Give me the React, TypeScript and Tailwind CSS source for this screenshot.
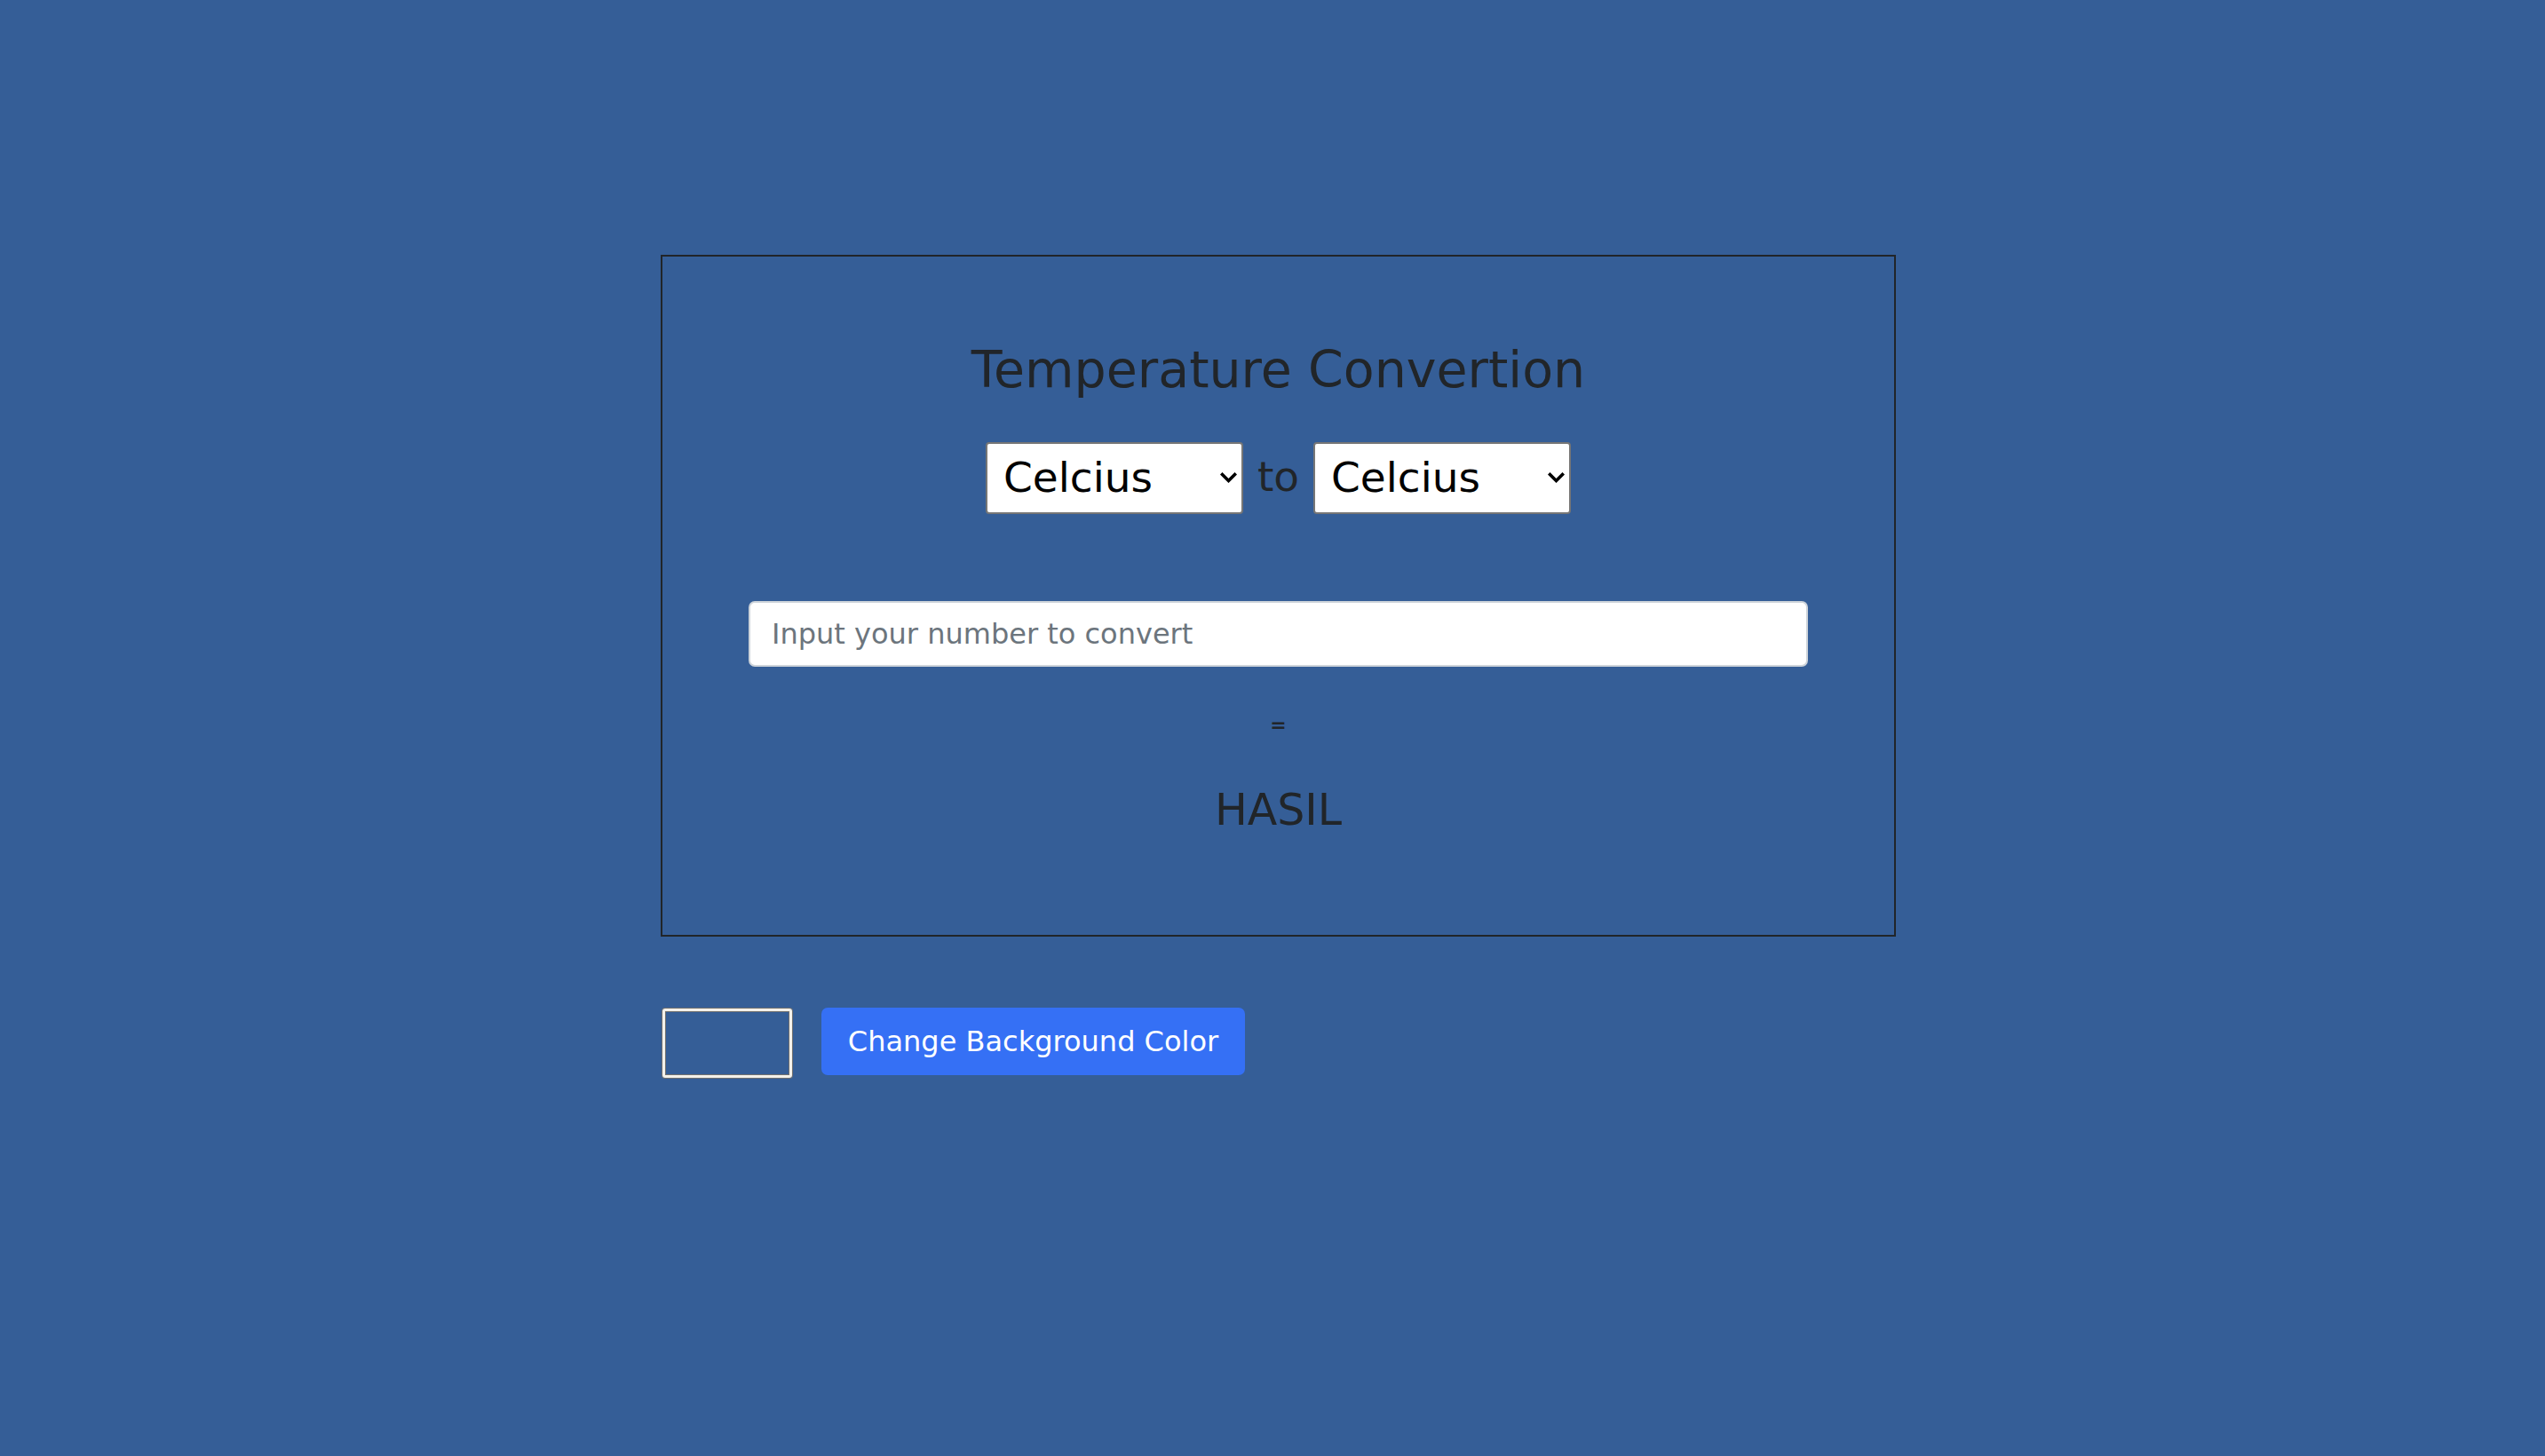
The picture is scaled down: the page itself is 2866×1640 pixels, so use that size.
import { useState } from "react";

const units = ["Celcius", "Fahrenheit", "Kelvin", "Reamur"];

function UnitSelect({
  value,
  onChange,
}: {
  value: string;
  onChange: (v: string) => void;
}) {
  return (
    <div className="relative">
      <select
        value={value}
        onChange={(e) => onChange(e.target.value)}
        className="appearance-none w-[290px] h-[81px] bg-white text-black text-[47px] border-2 border-[#767676] rounded-[4px] pl-[18px] pr-[34px] outline-none"
      >
        {units.map((u) => (
          <option key={u}>{u}</option>
        ))}
      </select>
      {/* chevron */}
      <svg
        className="absolute right-[7px] top-[34px] pointer-events-none"
        width="19"
        height="13"
        viewBox="0 0 19 13"
        fill="none"
      >
        <polyline
          points="2.5,2.5 9.5,9.5 16.5,2.5"
          stroke="#000"
          strokeWidth="3.6"
          strokeLinecap="square"
        />
      </svg>
    </div>
  );
}

function App() {
  const [from, setFrom] = useState("Celcius");
  const [to, setTo] = useState("Celcius");
  const [value, setValue] = useState("");

  return (
    <div
      className="min-h-screen w-full bg-[#355e97] text-[#212529] pt-[287px] pl-[744px]"
      style={{ fontFamily: "'DejaVu Sans', Lato, sans-serif" }}
    >
      {/* Converter card */}
      <div className="w-[1391px] h-[768px] border-2 border-[#212529] flex flex-col items-center pt-[93px]">
        <h1 className="text-[57px] leading-[68px]">Temperature Convertion</h1>

        <div className="mt-[48px] flex items-center">
          <UnitSelect value={from} onChange={setFrom} />
          <span className="w-[79px] text-center text-[47px] leading-none pb-[4px]">to</span>
          <UnitSelect value={to} onChange={setTo} />
        </div>

        <div className="w-full px-[97px] mt-[98px]">
          <input
            type="text"
            value={value}
            onChange={(e) => setValue(e.target.value)}
            placeholder="Input your number to convert"
            className="w-full h-[74px] bg-white rounded-[7px] border-2 border-[#ced4da] px-[24px] text-[32px] text-[#212529] placeholder:text-[#6c757d] outline-none"
          />
        </div>

        <p className="mt-[48px] text-[22px] leading-[36px] font-bold">=</p>
        <p className="mt-[48px] text-[49px] leading-[60px]">HASIL</p>
      </div>

      {/* Background controls */}
      <div className="mt-[80px] flex items-start gap-[33px]">
        <div className="ml-[2px] mt-[1px] w-[146px] h-[78px] rounded-[3px] border-[3px] border-[#f4f1ea] ring-1 ring-[#6f6f6f] shadow-[inset_0_0_0_1px_#6f6f6f]" />
        <button className="w-[477px] h-[76px] bg-[#3570f5] text-white text-[32px] rounded-[7px]">
          Change Background Color
        </button>
      </div>
    </div>
  );
}

export default App;
